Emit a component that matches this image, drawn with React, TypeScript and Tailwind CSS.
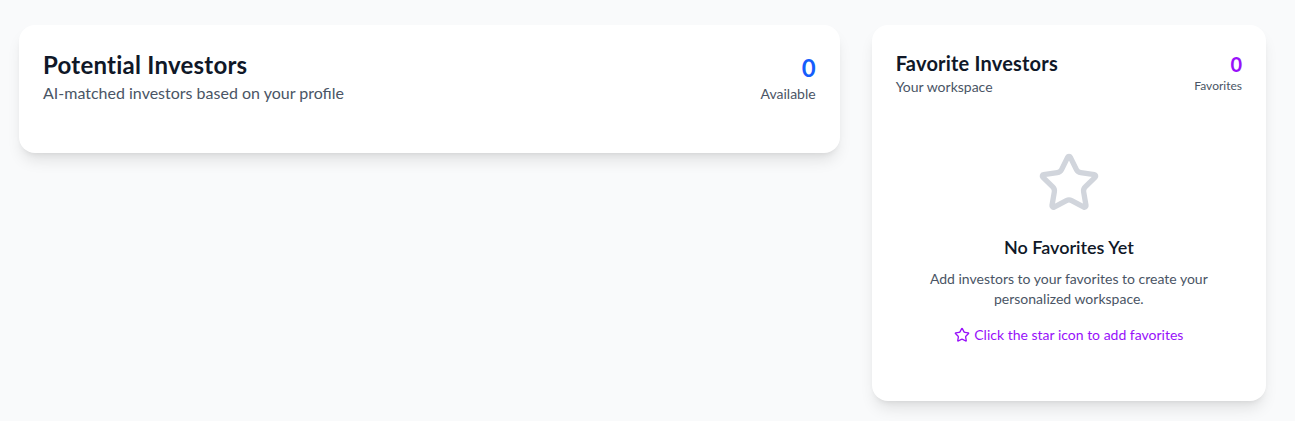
import React from "react";

function StarIcon({ className }: { className?: string }) {
  return (
    <svg
      viewBox="0 0 24 24"
      fill="none"
      stroke="currentColor"
      strokeWidth={2}
      strokeLinecap="round"
      strokeLinejoin="round"
      className={className}
    >
      <path d="M11.525 2.295a.53.53 0 0 1 .95 0l2.31 4.679a2.123 2.123 0 0 0 1.595 1.16l5.166.756a.53.53 0 0 1 .294.904l-3.736 3.638a2.123 2.123 0 0 0-.611 1.878l.882 5.14a.53.53 0 0 1-.771.56l-4.618-2.428a2.122 2.122 0 0 0-1.973 0L6.396 21.01a.53.53 0 0 1-.77-.56l.881-5.139a2.122 2.122 0 0 0-.611-1.879L2.16 9.795a.53.53 0 0 1 .294-.906l5.165-.755a2.122 2.122 0 0 0 1.597-1.16z" />
    </svg>
  );
}

export default function App() {
  return (
    <div
      className="min-h-[421px] bg-gray-50 pl-[19px] pr-[29px] pt-[25px]"
      style={{ fontFamily: 'Lato, "Noto Sans", sans-serif' }}
    >
      <div className="grid grid-cols-3 gap-8 items-start">
        <div className="col-span-2 bg-white rounded-2xl shadow-lg h-[128px] p-6">
          <div className="flex items-start justify-between">
            <div>
              <h1 className="text-2xl font-bold text-gray-900 leading-8 tracking-[0.01em]">Potential Investors</h1>
              <p className="text-base text-gray-600 leading-6">AI-matched investors based on your profile</p>
            </div>
            <div className="text-right">
              <div className="text-2xl font-bold text-blue-600 leading-8 mt-[3px]">0</div>
              <div className="text-sm text-gray-600 leading-5">Available</div>
            </div>
          </div>
        </div>

        <div className="bg-white rounded-2xl shadow-lg p-6 pb-[56px]">
          <div className="flex items-start justify-between">
            <div>
              <h2 className="text-xl font-bold text-gray-900 leading-7 tracking-[0.01em]">Favorite Investors</h2>
              <p className="text-sm text-gray-600 leading-5">Your workspace</p>
            </div>
            <div className="text-right">
              <div className="text-xl font-bold text-purple-600 leading-7 mt-[1px]">0</div>
              <div className="text-xs text-gray-600 leading-4">Favorites</div>
            </div>
          </div>
          <div className="flex flex-col items-center text-center mt-[54px]">
            <StarIcon className="w-16 h-16 text-gray-300" />
            <h3 className="mt-[18px] text-lg font-semibold text-gray-900 leading-7">No Favorites Yet</h3>
            <p className="mt-2 max-w-xs text-sm text-gray-600 leading-5">
              Add investors to your favorites to create your personalized workspace.
            </p>
            <div className="mt-4 flex items-center gap-1 text-sm text-purple-600 leading-5">
              <StarIcon className="w-4 h-4" />
              <span>Click the star icon to add favorites</span>
            </div>
          </div>
        </div>
      </div>
    </div>
  );
}
